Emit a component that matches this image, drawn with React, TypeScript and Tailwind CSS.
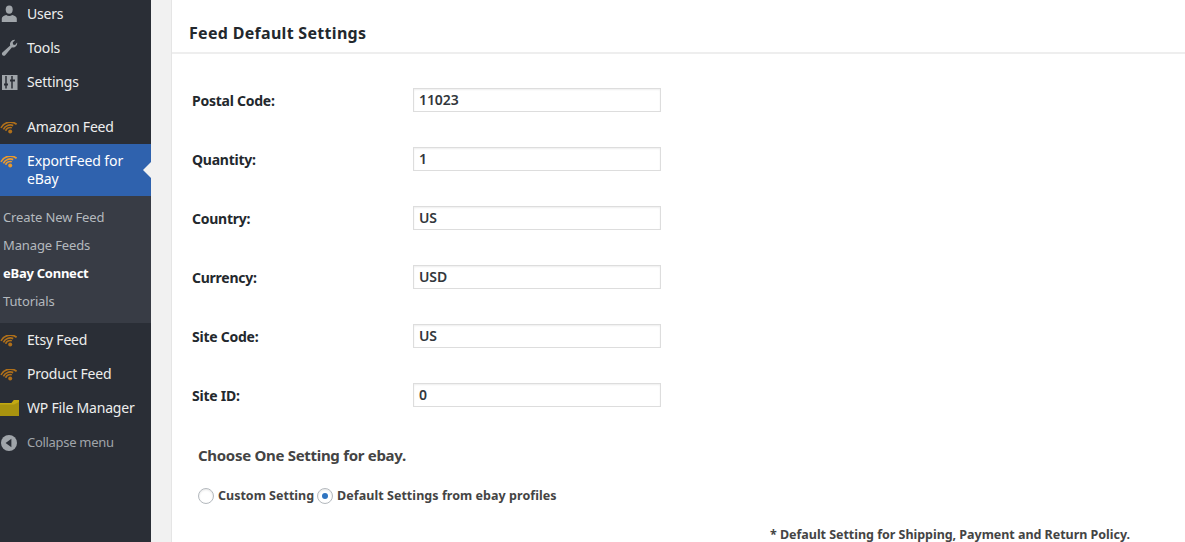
import React from "react";

const Wifi = ({ color = "#b0701a" }: { color?: string }) => (
  <svg width="18" height="12" viewBox="0 0 18 12" fill="none" className="mt-[1px] shrink-0">
    <circle cx="10.2" cy="9.6" r="2" fill={color} />
    <path d="M5.6 8.8A5 5 0 0 1 11.8 5.8M3.4 7.4A7.5 7.5 0 0 1 13.2 3.6M1 5.8A10.5 10.5 0 0 1 16.6 2.2" stroke={color} strokeWidth="1.7" />
  </svg>
);

const Users = () => (
  <svg width="18" height="18" viewBox="0 0 18 18" fill="#a0a5aa">
    <ellipse cx="9.2" cy="4.6" rx="3.5" ry="4.2" />
    <path d="M1.8 17v-3.4c0-2 2.4-3 4.4-3.6 1.6 1.3 4.4 1.3 6 0 2 .6 4.6 1.6 4.6 3.6V17z" />
  </svg>
);

const Tools = () => (
  <svg width="18" height="18" viewBox="0 0 18 18" fill="#a0a5aa">
    <path d="M17.2 4.4c0 2.6-2.8 4.6-5.2 3.8l-6.8 8c-1.6 1.6-4.4-1-2.8-2.8l7.8-7C9.4 4 11.5.8 14.4.8l.7.1-2.4 2.5.4 2 2 .5 2-2.3z" />
  </svg>
);

const Settings = () => (
  <svg width="18" height="16" viewBox="0 0 18 16">
    <rect x="2" y="1" width="15.5" height="15" fill="#a0a5aa" />
    <path d="M6 2v12.5M12 2v12.5" stroke="#2a2e36" strokeWidth="1.5" />
    <path d="M4 10.5h4M10 6.5h5" stroke="#2a2e36" strokeWidth="2" />
  </svg>
);

const Folder = () => (
  <svg width="19" height="16" viewBox="0 0 19 16" className="shrink-0">
    <path d="M0 3h11.5L14 0h5v16H0z" fill="#a8930f" />
    <path d="M0 3h11.5L14 0h5v2L14 4.6H0z" fill="#c2a912" />
  </svg>
);

const Collapse = () => (
  <svg width="16" height="16" viewBox="0 0 16 16">
    <circle cx="8" cy="8" r="8" fill="#a0a5aa" />
    <path d="M10.4 3.8v8.4L4.6 8z" fill="#2a2e36" />
  </svg>
);

function MenuRow({ icon, label }: { icon: React.ReactNode; label: string }) {
  return (
    <div className="flex h-[34px] items-center text-[14px] tracking-[-0.2px] text-[#eeeeee]">
      <div className="flex w-[27px] shrink-0 items-center">{icon}</div>
      <span className="mb-[2px] whitespace-nowrap">{label}</span>
    </div>
  );
}

const fields = [
  ["Postal Code:", "11023"],
  ["Quantity:", "1"],
  ["Country:", "US"],
  ["Currency:", "USD"],
  ["Site Code:", "US"],
  ["Site ID:", "0"],
];

export default function App() {
  return (
    <div className="flex h-[542px] w-[1185px] overflow-hidden bg-[#f1f1f1] font-['Noto_Sans',sans-serif]">
      <aside className="-mt-[3px] h-[545px] w-[151px] shrink-0 bg-[#2a2e36]">
        <MenuRow icon={<Users />} label="Users" />
        <MenuRow icon={<Tools />} label="Tools" />
        <MenuRow icon={<Settings />} label="Settings" />
        <div className="h-[11px]" />
        <MenuRow icon={<Wifi />} label="Amazon Feed" />
        <div className="relative flex h-[52px] items-center bg-[#2f62ae] text-[14px] leading-[18px] tracking-[-0.1px] text-white">
          <div className="mb-[18px] flex w-[27px] shrink-0 items-center">
            <Wifi color="#eb9a2d" />
          </div>
          <span>
            ExportFeed for
            <br />
            eBay
          </span>
          <div className="absolute right-0 top-[18px] h-0 w-0 border-y-[8px] border-r-[8px] border-y-transparent border-r-[#f1f1f1]" />
        </div>
        <div className="bg-[#383c45] pb-[7px] pl-[3px] pt-[8px] text-[13px] tracking-[-0.13px] text-[#b4b9be]">
          <div className="flex h-[28px] items-center">Create New Feed</div>
          <div className="flex h-[28px] items-center">Manage Feeds</div>
          <div className="flex h-[28px] items-center font-bold tracking-[-0.25px] text-white">eBay Connect</div>
          <div className="flex h-[28px] items-center">Tutorials</div>
        </div>
        <MenuRow icon={<Wifi />} label="Etsy Feed" />
        <MenuRow icon={<Wifi />} label="Product Feed" />
        <MenuRow icon={<Folder />} label="WP File Manager" />
        <div className="flex h-[34px] items-center pt-[1px] text-[13px] tracking-[-0.3px] text-[#a0a5aa]">
          <div className="w-[27px] pl-[1px]">
            <Collapse />
          </div>
          <span>Collapse menu</span>
        </div>
      </aside>
      <main className="ml-[20px] min-w-0 flex-1 border-l border-[#e5e5e5] bg-white">
        <div className="flex h-[54px] items-center border-b-2 border-[#eeeeee] pl-[17px] pt-[14px] text-[16px] font-bold tracking-[0.3px] text-[#23282d]">
          Feed Default Settings
        </div>
        <div className="pl-[20px] pt-[16px]">
          {fields.map(([label, value]) => (
            <div key={label} className="flex h-[59px] items-center">
              <label className="mt-[2px] w-[221px] text-[14px] font-bold tracking-[-0.25px] text-[#23282d]">{label}</label>
              <div className="flex h-[24px] w-[248px] items-center border border-[#dddddd] pl-[5px] text-[14px] font-semibold tracking-[-0.1px] text-[#32373c] shadow-[inset_0_1px_2px_rgba(0,0,0,0.07)]">
                {value}
              </div>
            </div>
          ))}
          <div className="pl-[6px] pt-[20px] text-[15px] font-bold tracking-[-0.3px] text-[#444444]">Choose One Setting for ebay.</div>
          <div className="flex items-center pl-[6px] pt-[20px] text-[12.5px] font-bold text-[#444444]">
            <span className="mr-[4px] h-[16px] w-[16px] rounded-full border border-[#b4b9be] shadow-[inset_0_1px_2px_rgba(0,0,0,0.1)]" />
            <span className="mr-[3px]">Custom Setting</span>
            <span className="mr-[4px] flex h-[16px] w-[16px] items-center justify-center rounded-full border border-[#b4b9be] shadow-[inset_0_1px_2px_rgba(0,0,0,0.1)]">
              <span className="h-[6px] w-[6px] rounded-full bg-[#2f74c0]" />
            </span>
            <span className="tracking-[0.05px]">Default Settings from ebay profiles</span>
          </div>
          <div className="whitespace-nowrap pl-[578px] pt-[21px] text-[12.5px] font-bold tracking-[-0.03px] text-[#444444]">
            * Default Setting for Shipping, Payment and Return Policy.
          </div>
        </div>
      </main>
    </div>
  );
}
